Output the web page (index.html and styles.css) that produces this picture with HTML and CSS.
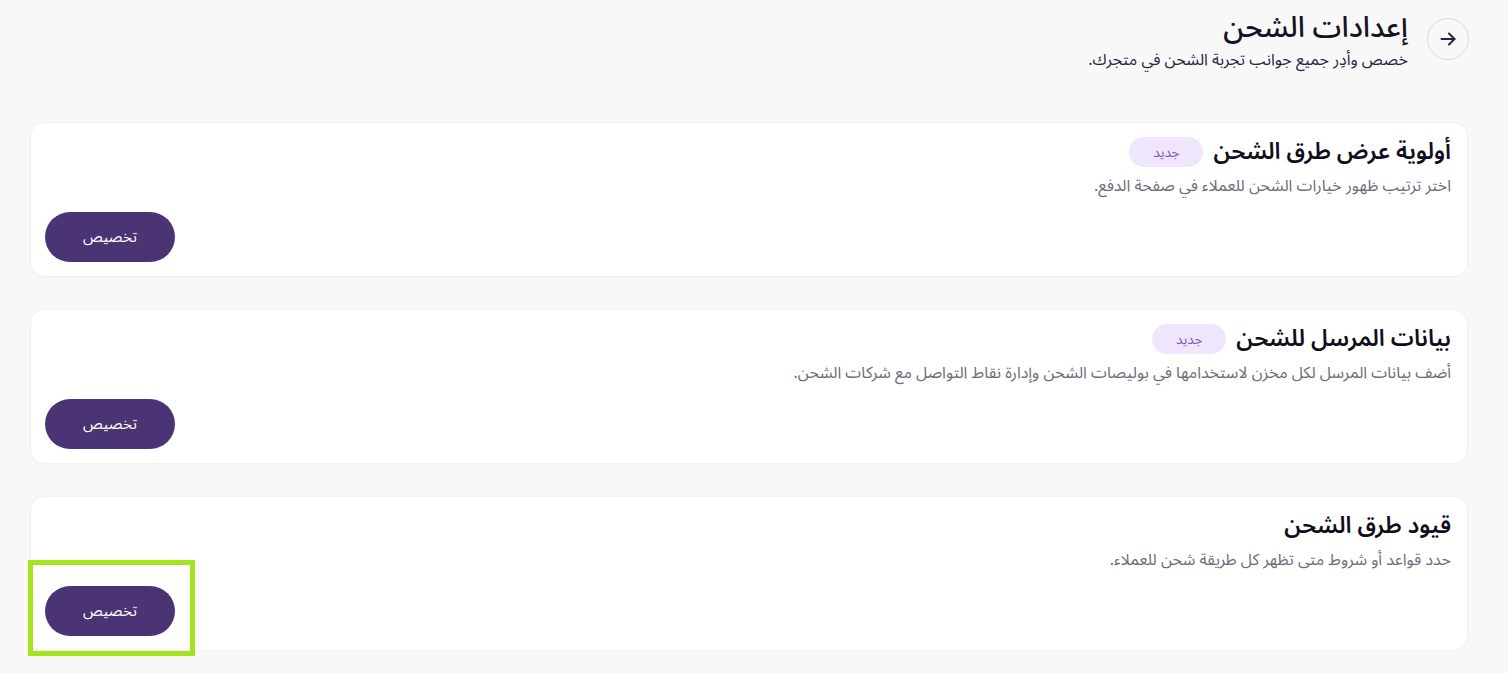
FILE: index.html
```html
<!DOCTYPE html>
<html lang="ar" dir="rtl">
<head>
<meta charset="utf-8">
<title>إعدادات الشحن</title>
<link rel="stylesheet" href="styles.css">
</head>
<body>
<div class="page">
  <header class="header">
    <button class="back" aria-label="رجوع">
      <svg width="20" height="20" viewBox="0 0 20 20" fill="none" stroke="#2b2140" stroke-width="2" stroke-linecap="round" stroke-linejoin="round"><path d="M3.5 10h13"/><path d="M11 4.5l5.5 5.5-5.5 5.5"/></svg>
    </button>
    <div class="head-text">
      <h1 class="title">إعدادات الشحن</h1>
      <p class="subtitle">خصص وأدِر جميع جوانب تجربة الشحن في متجرك.</p>
    </div>
  </header>

  <section class="cards">
    <div class="card">
      <div class="card-head">
        <h2 class="card-title">أولوية عرض طرق الشحن</h2>
        <span class="badge">جديد</span>
      </div>
      <p class="card-desc">اختر ترتيب ظهور خيارات الشحن للعملاء في صفحة الدفع.</p>
      <div class="card-foot"><button class="btn">تخصيص</button></div>
    </div>
    <div class="card">
      <div class="card-head">
        <h2 class="card-title">بيانات المرسل للشحن</h2>
        <span class="badge">جديد</span>
      </div>
      <p class="card-desc">أضف بيانات المرسل لكل مخزن لاستخدامها في بوليصات الشحن وإدارة نقاط التواصل مع شركات الشحن.</p>
      <div class="card-foot"><button class="btn">تخصيص</button></div>
    </div>
    <div class="card card-last">
      <div class="card-head">
        <h2 class="card-title">قيود طرق الشحن</h2>
      </div>
      <p class="card-desc">حدد قواعد أو شروط متى تظهر كل طريقة شحن للعملاء.</p>
      <div class="card-foot"><span class="btn-wrap"><button class="btn">تخصيص</button><span class="mark"></span></span></div>
    </div>
  </section>
</div>
</body>
</html>
```

FILE: styles.css
```css
* { box-sizing: border-box; }
html, body { margin: 0; padding: 0; }
body {
  background: #f8f8f8;
  font-family: "Noto Sans Arabic", "DejaVu Sans", "Noto Sans", sans-serif;
  color: #1d1a24;
  min-height: 673px;
}
.page {
  padding: 8px 39px 22px 30px;
}
.header {
  display: flex;
  align-items: flex-start;
  gap: 19px;
  height: 114px;
}
.back {
  margin-top: 10px;
  width: 42px;
  height: 42px;
  border-radius: 50%;
  border: 1px solid #dcdae0;
  background: transparent;
  display: flex;
  align-items: center;
  justify-content: center;
  padding: 0;
  flex: none;
}
.head-text { display: flex; flex-direction: column; }
.title {
  margin: 0;
  font-size: 29px;
  font-weight: 500;
  line-height: 40px;
  color: #16121f;
}
.subtitle {
  margin: 0;
  font-size: 16px;
  line-height: 24px;
  color: #2a2240;
}
.cards {
  display: flex;
  flex-direction: column;
  gap: 32px;
  margin-right: 1px;
}
.card {
  background: #ffffff;
  border: 1px solid #f0f0f0;
  border-radius: 14px;
  height: 155px;
  padding: 14px 16px 14px 14px;
  display: flex;
  flex-direction: column;
}
.card-last { position: relative; z-index: 1; }
.card-head {
  display: flex;
  align-items: center;
  gap: 10px;
  height: 30px;
}
.card-title {
  margin: 0;
  font-size: 23px;
  font-weight: 600;
  color: #110d1a;
  line-height: 30px;
}
.badge {
  background: #efe6fd;
  color: #8553c4;
  font-size: 13.5px;
  border-radius: 15px;
  height: 30px;
  width: 74px;
  display: flex;
  align-items: center;
  justify-content: center;
}
.card-desc {
  margin: 8px 0 0;
  font-size: 16px;
  line-height: 22px;
  color: #6f6a78;
}
.card-foot {
  margin-top: auto;
  display: flex;
  justify-content: flex-end;
}
.btn-wrap {
  position: relative;
  display: block;
}
.btn {
  display: block;
  width: 130px;
  height: 50px;
  border: none;
  border-radius: 25px;
  background: #4b3473;
  color: #ffffff;
  font-family: inherit;
  font-size: 15px;
  padding: 0;
}
.mark {
  position: absolute;
  left: -17px;
  right: -20px;
  top: -26px;
  bottom: -20px;
  border: 5px solid #a4e41c;
  pointer-events: none;
}
```
